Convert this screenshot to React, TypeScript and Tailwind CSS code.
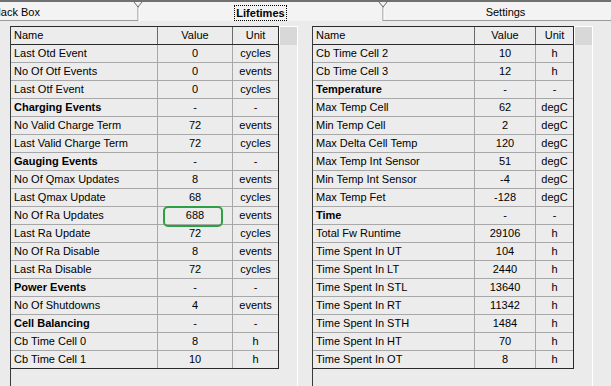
import React from "react";

type Row = [string, string, string, boolean?];

const leftRows: Row[] = [
  ["Last Otd Event", "0", "cycles"],
  ["No Of Otf Events", "0", "events"],
  ["Last Otf Event", "0", "cycles"],
  ["Charging Events", "-", "-", true],
  ["No Valid Charge Term", "72", "events"],
  ["Last Valid Charge Term", "72", "cycles"],
  ["Gauging Events", "-", "-", true],
  ["No Of Qmax Updates", "8", "events"],
  ["Last Qmax Update", "68", "cycles"],
  ["No Of Ra Updates", "688", "events"],
  ["Last Ra Update", "72", "cycles"],
  ["No Of Ra Disable", "8", "events"],
  ["Last Ra Disable", "72", "cycles"],
  ["Power Events", "-", "-", true],
  ["No Of Shutdowns", "4", "events"],
  ["Cell Balancing", "-", "-", true],
  ["Cb Time Cell 0", "8", "h"],
  ["Cb Time Cell 1", "10", "h"],
];

const rightRows: Row[] = [
  ["Cb Time Cell 2", "10", "h"],
  ["Cb Time Cell 3", "12", "h"],
  ["Temperature", "-", "-", true],
  ["Max Temp Cell", "62", "degC"],
  ["Min Temp Cell", "2", "degC"],
  ["Max Delta Cell Temp", "120", "degC"],
  ["Max Temp Int Sensor", "51", "degC"],
  ["Min Temp Int Sensor", "-4", "degC"],
  ["Max Temp Fet", "-128", "degC"],
  ["Time", "-", "-", true],
  ["Total Fw Runtime", "29106", "h"],
  ["Time Spent In UT", "104", "h"],
  ["Time Spent In LT", "2440", "h"],
  ["Time Spent In STL", "13640", "h"],
  ["Time Spent In RT", "11342", "h"],
  ["Time Spent In STH", "1484", "h"],
  ["Time Spent In HT", "70", "h"],
  ["Time Spent In OT", "8", "h"],
];

function Separator() {
  return (
    <svg
      className="absolute right-[-5px] top-0"
      width="10"
      height="19"
      viewBox="0 0 10 19"
    >
      <path d="M1 0 L5 5 L9 0" stroke="#6a6a6a" strokeWidth="1" fill="none" />
      <line x1="5" y1="5" x2="5" y2="19" stroke="#8a8a8a" strokeWidth="1" />
      <line x1="6" y1="6" x2="6" y2="19" stroke="#ffffff" strokeWidth="1" />
    </svg>
  );
}

function Tab({
  label,
  active,
  sep,
}: {
  label: string;
  active?: boolean;
  sep?: boolean;
}) {
  return (
    <div
      className={
        "relative w-[245px] shrink-0 h-[19px] flex items-center justify-center " +
        (active ? "" : "border-b border-[#9a9a9a]")
      }
    >
      {active ? (
        <span className="font-bold px-[1px] leading-[14px] border border-dotted border-black mt-[3px]">
          {label}
        </span>
      ) : (
        <span className="leading-[14px] mt-[1px]">{label}</span>
      )}
      {sep && <Separator />}
    </div>
  );
}

function Table({
  rows,
  w,
  extW,
}: {
  rows: Row[];
  w: [number, number, number];
  extW: number;
}) {
  return (
    <div className="flex items-start">
      <div className="border-t border-r border-b border-[#2a2a2a] bg-[#ececec]">
        <div className="flex h-[18px] border-b border-[#2a2a2a]">
          <div
            style={{ width: w[0] }}
            className="border-r border-[#6a6a6a] pl-[3px] leading-[17px]"
          >
            Name
          </div>
          <div
            style={{ width: w[1] }}
            className="border-r border-[#6a6a6a] text-center leading-[17px]"
          >
            Value
          </div>
          <div style={{ width: w[2] }} className="text-center leading-[17px]">
            Unit
          </div>
        </div>
        {rows.map((r, i) => (
          <div
            key={i}
            className="flex h-[18px] border-b border-[#a8a8a8] last:border-b-0 last:h-[17px]"
          >
            <div
              style={{ width: w[0] }}
              className={
                "border-r border-[#a8a8a8] pl-[3px] leading-[17px] whitespace-nowrap " +
                (r[3] ? "font-bold" : "")
              }
            >
              {r[0]}
            </div>
            <div
              style={{ width: w[1] }}
              className="border-r border-[#a8a8a8] text-center leading-[17px]"
            >
              {r[1]}
            </div>
            <div style={{ width: w[2] }} className="text-center leading-[17px]">
              {r[2]}
            </div>
          </div>
        ))}
      </div>
      <div
        style={{ width: extW }}
        className="h-[19px] bg-[#d8d8d8] border-t border-l border-white"
      />
    </div>
  );
}

export default function App() {
  return (
    <div
      className="relative w-[611px] h-[386px] overflow-hidden bg-[#ebebeb] text-[11px] text-black"
      style={{ fontFamily: '"Liberation Sans", Arial, sans-serif' }}
    >
      <div className="h-[21px] bg-[#f3f3f3] border-t-2 border-[#707070] overflow-hidden">
        <div className="flex ml-[-107px]">
          <Tab label="Black Box" sep />
          <Tab label="Lifetimes" active sep />
          <Tab label="Settings" />
        </div>
      </div>
      <div className="flex pt-[5px]">
        <div className="ml-[10px] w-[288px] h-[360px] border-l border-[#3a3a3a] border-r border-r-white">
          <Table rows={leftRows} w={[147, 75, 45]} extW={18} />
        </div>
        <div className="ml-[14px] w-[281px] h-[360px] border-l border-[#3a3a3a] border-r border-r-white">
          <Table rows={rightRows} w={[162, 61, 37]} extW={18} />
        </div>
      </div>
      <div className="absolute left-[163px] top-[206px] w-[60px] h-[21px] border-2 border-[#2ea043] rounded-[5px]" />
    </div>
  );
}
